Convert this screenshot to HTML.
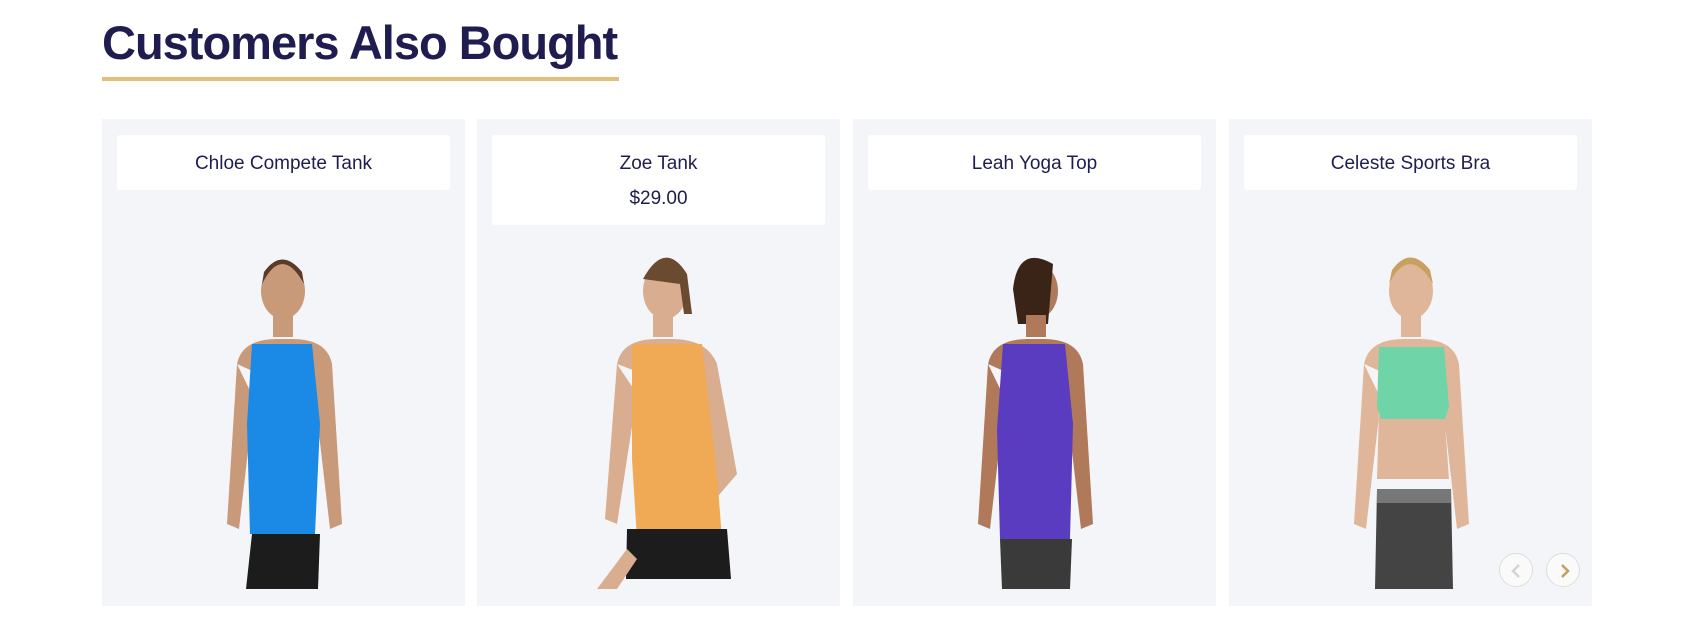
<!DOCTYPE html><html><head><style>
body{margin:0;width:1696px;height:637px;background:#fff;font-family:"Liberation Sans",sans-serif;position:relative;overflow:hidden}
h1{position:absolute;left:102px;top:15px;margin:0;font-size:47px;font-weight:700;color:#1f1d4f;letter-spacing:-1px}
.ul{position:absolute;left:102px;top:77px;width:517px;height:4px;background:#e2c07a}
.card{position:absolute;top:119px;width:363px;height:487px;background:#f4f5f9}
.box{position:absolute;left:15px;top:16px;right:15px;height:55px;background:#fff;border-radius:3px;text-align:center;color:#1f1d4f;font-size:19px}
.box .n{margin-top:18px}
.box .p{margin-top:13px;font-size:19px}
svg{position:absolute;left:0;top:0}
.btn{position:absolute;top:553px;width:34px;height:34px;border-radius:50%;border:1px solid #ddd;background:#fafafa;box-sizing:border-box}
</style></head><body>
<h1>Customers Also Bought</h1><div class="ul"></div>

<div class="card" style="left:102px"><div class="box"><div class="n">Chloe Compete Tank</div></div>
<svg width="363" height="487"><ellipse cx="181" cy="172" rx="22" ry="28" fill="#c99a7a"/><path d="M160 165 q20-40 42 0 l-2-12 q-20-25-38 0z" fill="#5a3a28"/><rect x="171" y="196" width="20" height="22" fill="#c99a7a"/><path d="M135 245 q5-25 40-25 h15 q35 0 40 25 l10 160 -12 5 -15-130 z M135 245 l-10 160 12 5 15-130z" fill="#c99a7a"/><path d="M150 225 h60 l8 80 -5 110 h-65 l-3-110z" fill="#1a8ae6"/><path d="M150 415 h68 l-2 55 h-72z" fill="#1c1c1c"/></svg></div>

<div class="card" style="left:477px"><div class="box" style="height:90px"><div class="n">Zoe Tank</div><div class="p">$29.00</div></div>
<svg width="363" height="487"><ellipse cx="188" cy="172" rx="22" ry="28" fill="#d9ae90"/><path d="M166 160 q22-40 44 -5 l5 40 -8 0 -4-30z" fill="#6b4a32"/><rect x="176" y="196" width="20" height="22" fill="#d9ae90"/><path d="M140 245 q5-25 40-25 h15 q35 0 45 25 l20 110 -30 35 -5-10 15-25 -20-80z M140 245 l-12 155 12 5 20-130z" fill="#d9ae90"/><path d="M155 225 h70 l15 130 5 65 h-85 l-5-80z" fill="#f0a955"/><path d="M150 410 h100 l4 50 h-105z" fill="#1c1c1c"/><path d="M120 470 l30-40 10 10 -20 30z" fill="#d9ae90"/></svg></div>

<div class="card" style="left:853px"><div class="box"><div class="n">Leah Yoga Top</div></div>
<svg width="363" height="487"><ellipse cx="183" cy="172" rx="22" ry="28" fill="#b07a5a"/><path d="M160 170 q5-45 40-25 l-5 60 -30 0z" fill="#3a2418"/><rect x="173" y="196" width="20" height="22" fill="#b07a5a"/><path d="M135 245 q5-25 40-25 h15 q35 0 40 25 l10 160 -12 5 -15-130 z M135 245 l-10 160 12 5 15-130z" fill="#b07a5a"/><path d="M150 225 h62 l8 80 -3 115 h-70 l-3-110z" fill="#5a3cc0"/><path d="M147 420 h72 l-2 50 h-68z" fill="#3a3a3a"/></svg></div>

<div class="card" style="left:1229px"><div class="box"><div class="n">Celeste Sports Bra</div></div>
<svg width="363" height="487"><ellipse cx="182" cy="172" rx="22" ry="28" fill="#e0b69a"/><path d="M160 165 q20-40 44 0 l-3-14 q-20-25-38 0z" fill="#c8a060"/><rect x="172" y="196" width="20" height="22" fill="#e0b69a"/><path d="M135 245 q5-25 40-25 h15 q35 0 40 25 l10 160 -12 5 -15-130 z M135 245 l-10 160 12 5 15-130z M150 290 h65 l5 70 h-72z" fill="#e0b69a"/><path d="M150 228 h65 l5 60 -4 12 h-64 l-4-12z" fill="#6fd4a8"/><path d="M148 370 h74 l2 100 h-78z" fill="#444"/><rect x="148" y="370" width="74" height="14" fill="#777"/></svg>
</div>
<div class="btn" style="left:1499px"><svg width="34" height="34"><path d="M19 11 l-6 6 6 6" stroke="#d4d4d4" stroke-width="2.5" fill="none"/></svg></div>
<div class="btn" style="left:1546px"><svg width="34" height="34"><path d="M15 11 l6 6 -6 6" stroke="#c2a060" stroke-width="2.5" fill="none"/></svg></div>
</body></html>
